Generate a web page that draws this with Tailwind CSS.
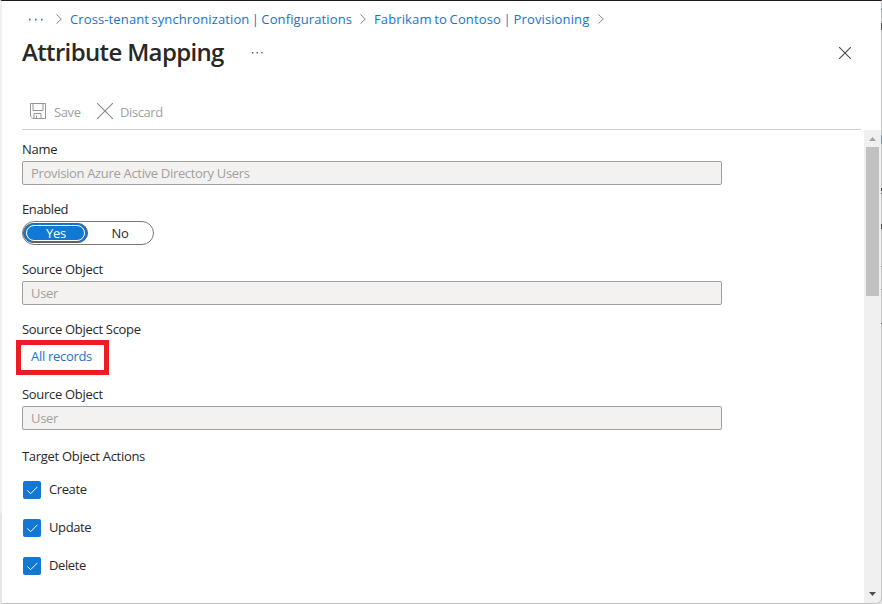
<!DOCTYPE html>
<html lang="en">
<head>
<meta charset="utf-8">
<title>Attribute Mapping</title>
<script src="https://cdn.jsdelivr.net/npm/@tailwindcss/browser@4"></script>
</head>
<body class="relative h-[604px] w-[882px] overflow-hidden bg-[#e4e4e4] font-['Open_Sans','Noto_Sans',sans-serif] text-[13px] leading-[18px] tracking-[-0.3px] whitespace-nowrap text-[#292827]">
<div class="flex h-[604px] w-[882px] flex-col overflow-hidden rounded-br-[7px] border-t border-r border-b border-l-2 border-t-[#1b1a1f] border-r-[#c4c4c4] border-b-[#c0c0c0] border-l-[#f0f0f0] bg-white">
  <header class="h-[129px] shrink-0 pl-5">
    <nav class="flex h-9 items-center pl-[7px] text-[#1673d1]">
      <svg class="mr-[13px] h-[3px] w-[14px]" viewBox="0 0 14 3" fill="#1673d1"><path d="M0 .8h1.6v1.6H0zM6 .8h1.6v1.6H6zM12 .8h1.6v1.6H12z"/></svg>
      <svg class="mr-2 h-[10px] w-[6px]" viewBox="0 0 6 10" fill="none" stroke="#868686"><path d="M.5.5 5.3 5 .5 9.5"/></svg>
      <a class="w-[282px] tracking-[0.12px] [word-spacing:-1.2px]">Cross-tenant synchronization | Configurations</a>
      <svg class="mr-2 ml-2 h-[10px] w-[6px]" viewBox="0 0 6 10" fill="none" stroke="#868686"><path d="M.5.5 5.3 5 .5 9.5"/></svg>
      <a class="w-[216px] tracking-[0.12px] [word-spacing:-0.8px]">Fabrikam to Contoso | Provisioning</a>
      <svg class="ml-2 h-[10px] w-[6px]" viewBox="0 0 6 10" fill="none" stroke="#868686"><path d="M.5.5 5.3 5 .5 9.5"/></svg>
    </nav>
    <div class="flex h-8 items-center">
      <h1 class="w-[230px] pb-[2px] text-[24px] leading-[30px] font-semibold tracking-[-0.65px]">Attribute Mapping</h1>
      <svg class="h-[2px] w-[12px]" viewBox="0 0 12 2" fill="#605e5c"><path d="M0 0h1.4v1.4H0zM4.6 0H6v1.4H4.6zM9.2 0h1.4v1.4H9.2z"/></svg>
      <svg class="ml-[575px] h-3 w-3" viewBox="0 0 12 12" fill="none" stroke="#4a4a4a" stroke-width="1.1"><path d="m0 0 12 12M12 0 0 12"/></svg>
    </div>
    <div class="mt-[25px] flex h-9 w-[839px] items-center border-b border-[#d2d0ce] pb-[2px] pl-2 text-[#a19f9d]">
      <svg class="h-4 w-4" viewBox="0 0 16 16" fill="none" stroke="#979593"><path d="M.5.5h15v15H2.7L.5 13.3zM3 .5v7h10v-7M4 15.5v-5h7v5M6.5 12.5v3"/></svg>
      <span class="mt-[2px] ml-2 w-[43px] tracking-[-0.4px]">Save</span>
      <svg class="h-4 w-4" viewBox="0 0 16 16" fill="none" stroke="#8a8886" stroke-width="1.1"><path d="m0 0 16 16M16 0 0 16"/></svg>
      <span class="mt-[2px] ml-[7px] tracking-[-0.4px]">Discard</span>
    </div>
  </header>
  <div class="flex min-h-0 flex-1">
    <main class="flex-1 pt-[10px] pl-5">
      <label class="block h-[21px]">Name</label>
      <div class="h-6 w-[700px] rounded-[2px] border border-[#a19f9d] bg-[#f3f2f1] pl-2 leading-[23px] tracking-[-0.32px] text-[#a19f9d]">Provision Azure Active Directory Users</div>
      <label class="mt-[15px] block h-[21px] tracking-[-0.4px]">Enabled</label>
      <div class="flex h-6 w-[132px] rounded-full border border-[#7a7876] py-px text-center leading-5">
        <div class="h-5 w-[65px] rounded-full border border-[#605e5c] bg-[#1278d4] p-[2px]"><div class="-mt-px h-4 rounded-full border border-white pl-px leading-[15px] text-white">Yes</div></div>
        <div class="w-[64px] leading-[21px]">No</div>
      </div>
      <label class="mt-[15px] block h-[21px]">Source Object</label>
      <div class="h-6 w-[700px] rounded-[2px] border border-[#a19f9d] bg-[#f3f2f1] pl-2 leading-[23px] text-[#a19f9d]">User</div>
      <label class="mt-[15px] block h-5">Source Object Scope</label>
      <div class="-ml-[6px] h-[35px] w-[93px] border-5 border-[#ed1c24] pl-[10px] leading-[23px] text-[#1673d1]">All records</div>
      <label class="mt-[10px] block h-[21px]">Source Object</label>
      <div class="h-6 w-[700px] rounded-[2px] border border-[#a19f9d] bg-[#f3f2f1] pl-2 leading-[23px] text-[#a19f9d]">User</div>
      <h2 class="mt-[17px] h-[34px]">Target Object Actions</h2>
      <div class="flex flex-col gap-5 pl-px tracking-[-0.4px]">
        <div class="flex h-[18px] items-center gap-2"><svg class="h-[18px] w-[18px] rounded-[2px] bg-[#1278d4]" viewBox="0 0 18 18" fill="none" stroke="#fff"><path d="m4.3 9.4 3.3 3.3 6.8-6.8"/></svg><span class="-mt-[2px]">Create</span></div>
        <div class="flex h-[18px] items-center gap-2"><svg class="h-[18px] w-[18px] rounded-[2px] bg-[#1278d4]" viewBox="0 0 18 18" fill="none" stroke="#fff"><path d="m4.3 9.4 3.3 3.3 6.8-6.8"/></svg><span class="-mt-[2px]">Update</span></div>
        <div class="flex h-[18px] items-center gap-2"><svg class="h-[18px] w-[18px] rounded-[2px] bg-[#1278d4]" viewBox="0 0 18 18" fill="none" stroke="#fff"><path d="m4.3 9.4 3.3 3.3 6.8-6.8"/></svg><span class="-mt-[2px]">Delete</span></div>
      </div>
    </main>
    <aside class="flex w-[17px] flex-col items-center bg-[#f0f0f0]">
      <svg class="h-[17px] w-[17px] shrink-0" viewBox="0 0 17 17" fill="#a3a3a3"><path d="M5 11h7L8.5 7z"/></svg>
      <div class="h-[149px] w-[13px] bg-[#c1c1c1]"></div>
      <svg class="mt-auto h-[17px] w-[17px] shrink-0" viewBox="0 0 17 17" fill="#505050"><path d="M5 6h7l-3.5 4z"/></svg>
    </aside>
  </div>
</div>
<!-- slivers of the window behind, seen at the panel's edges -->
<svg class="absolute top-0 right-0 h-[604px] w-px" viewBox="0 0 1 604" shape-rendering="crispEdges"><path fill="#7793a8" d="M0 8h1v2H0zM0 135h1v9H0z"/><path fill="#4c4a4c" d="M0 23h1v7H0zM0 188h1v3H0zM0 193h1v1H0zM0 224h1v5H0zM0 323h1v1H0z"/><path fill="#8c8c8c" d="M0 266h1v1H0zM0 289h1v1H0z"/></svg>
<div class="absolute top-[513px] left-0 h-[91px] w-[2px] bg-[#e6e6e6]"></div>
</body>
</html>
